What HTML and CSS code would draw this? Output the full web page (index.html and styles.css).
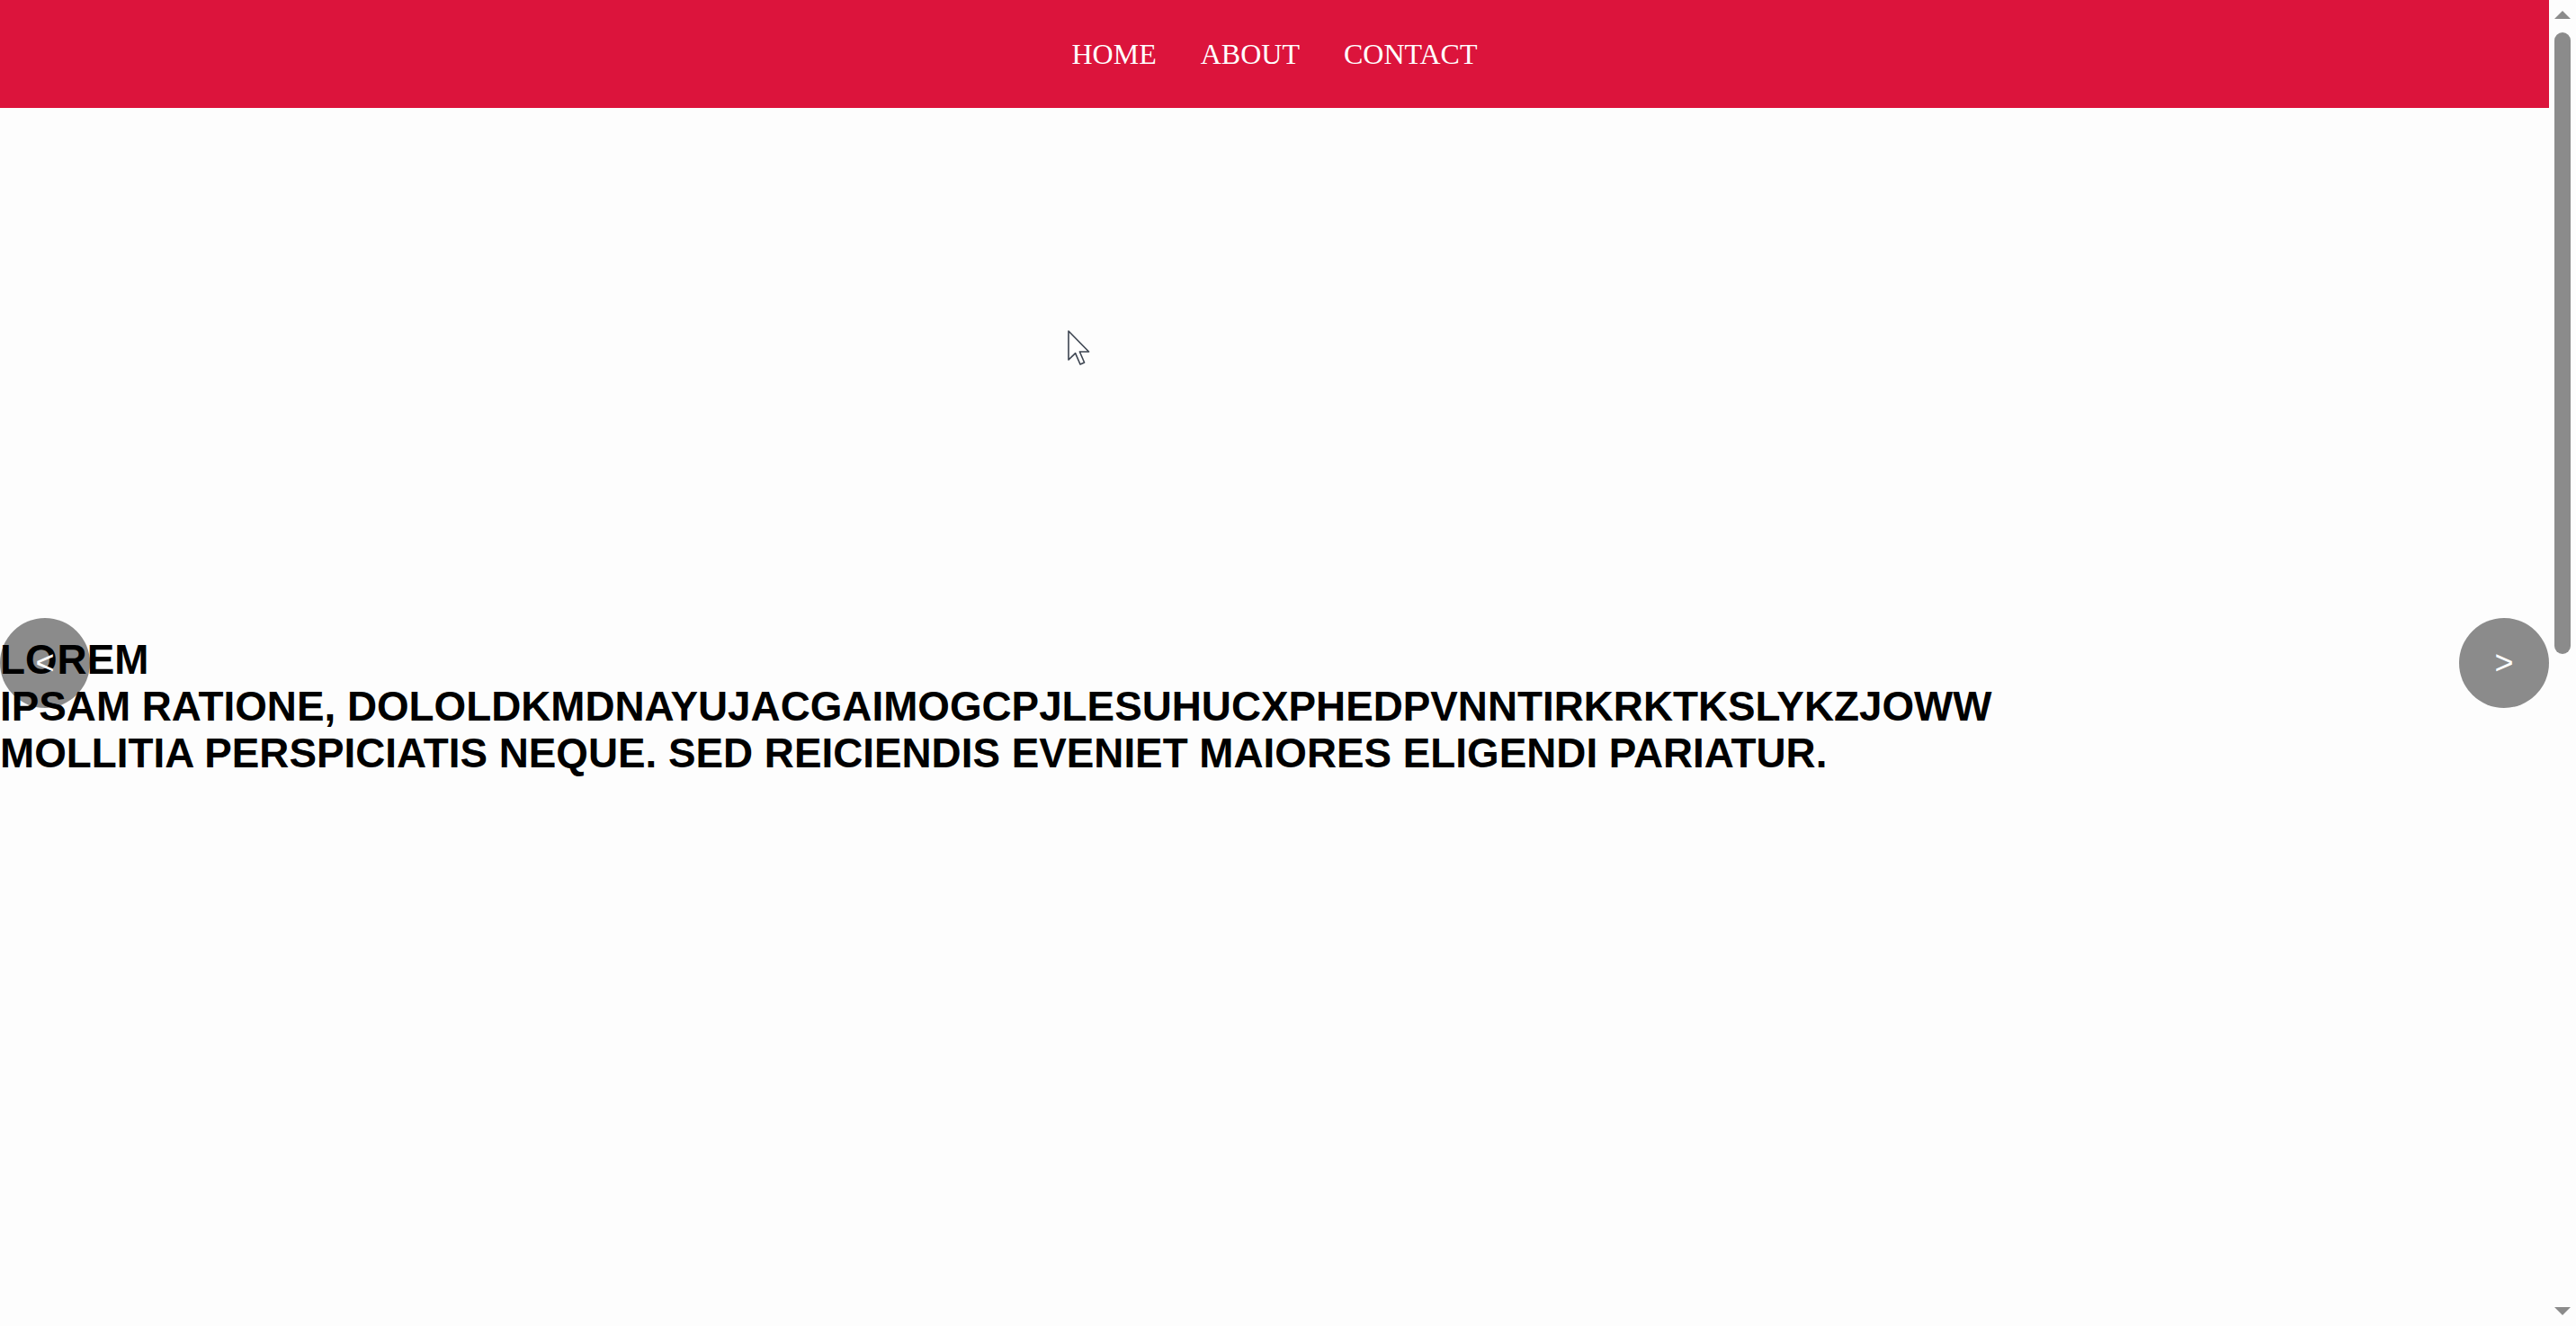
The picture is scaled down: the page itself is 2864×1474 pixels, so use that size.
FILE: index.html
```html
<!DOCTYPE html>
<html lang="en">
<head>
<meta charset="utf-8">
<title>Slider</title>
<link rel="stylesheet" href="styles.css">
</head>
<body>
<div class="page">
  <header class="topbar">
    <nav class="menu">
      <a class="menu-link" href="#">Home</a>
      <a class="menu-link" href="#">About</a>
      <a class="menu-link" href="#">Contact</a>
    </nav>
  </header>
  <main class="slider">
    <div class="slide">
      <h1 class="slide-text">
        <span class="slide-line">Lorem</span>
        <span class="slide-line">ipsam ratione, dololdkmdnayujacgaimogcpjlesuhucxphedpvnntirkrktkslykzjoww</span>
        <span class="slide-line">mollitia perspiciatis neque. Sed reiciendis eveniet maiores eligendi pariatur.</span>
      </h1>
    </div>
    <button class="arrow arrow-prev" type="button">&lt;</button>
    <button class="arrow arrow-next" type="button">&gt;</button>
    <svg class="pointer" width="26" height="40" viewBox="0 0 13 20" aria-hidden="true">
      <path d="M0.5 0.5 L0.5 16.5 L4.3 12.8 L7 19 L9.3 18 L6.7 12 L11.8 12 Z" fill="#ffffff" stroke="#3c4450" stroke-width="0.8" stroke-linejoin="round"/>
    </svg>
  </main>
</div>
<div class="scrollbar" aria-hidden="true">
  <div class="scroll-btn scroll-btn-up"><span class="tri tri-up"></span></div>
  <div class="scroll-track"><div class="scroll-thumb"></div></div>
  <div class="scroll-btn scroll-btn-down"><span class="tri tri-down"></span></div>
</div>
</body>
</html>
```

FILE: styles.css
```css
html {
  background: #fdfdfd;
  overflow: hidden;
}

body {
  margin: 0;
  height: 100vh;
  display: flex;
  background: #fdfdfd;
  overflow: hidden;
}

.page {
  flex: 1;
  min-width: 0;
  overflow: hidden;
}

.topbar {
  height: 120px;
  background: #dc143c;
  display: flex;
  align-items: center;
  justify-content: center;
}

.menu {
  display: flex;
  gap: 49px;
}

.menu-link {
  font-family: "Liberation Serif", "Times New Roman", serif;
  font-size: 32px;
  color: #ffffff;
  text-decoration: none;
  text-transform: uppercase;
}

.slider {
  position: relative;
  height: 1234px;
}

.slide {
  padding-top: 588px;
}

.slide-text {
  margin: 0;
  font-family: "Liberation Sans", Arial, sans-serif;
  font-size: 45.8px;
  font-weight: 700;
  line-height: 52px;
  color: #000000;
  text-transform: uppercase;
}

.slide-line {
  display: block;
}

.arrow {
  position: absolute;
  top: 567px;
  width: 100px;
  height: 100px;
  border: 0;
  border-radius: 50%;
  padding: 0;
  background: rgba(0, 0, 0, 0.45);
  color: #ffffff;
  font-family: "Liberation Sans", Arial, sans-serif;
  font-size: 36px;
  line-height: 100px;
  text-align: center;
  cursor: pointer;
}

.arrow-prev {
  left: 0;
}

.arrow-next {
  right: 0;
}

.pointer {
  position: absolute;
  left: 1187px;
  top: 247px;
}

.scrollbar {
  width: 30px;
  flex: none;
  display: flex;
  flex-direction: column;
  background: #fdfdfd;
}

.scroll-btn {
  height: 30px;
  flex: none;
  display: flex;
  justify-content: center;
}

.scroll-btn-up {
  align-items: flex-start;
  padding-top: 12px;
  box-sizing: border-box;
}

.scroll-btn-down {
  align-items: flex-start;
  padding-top: 9px;
  box-sizing: border-box;
}

.tri {
  width: 0;
  height: 0;
  border-left: 9px solid transparent;
  border-right: 9px solid transparent;
}

.tri-up {
  border-bottom: 9px solid #8b8b8b;
}

.tri-down {
  border-top: 9px solid #8b8b8b;
}

.scroll-track {
  flex: 1;
  padding-top: 6px;
  display: flex;
  justify-content: center;
  align-items: flex-start;
}

.scroll-thumb {
  width: 18px;
  height: 691px;
  border-radius: 9px;
  background: #8b8b8b;
}
```
